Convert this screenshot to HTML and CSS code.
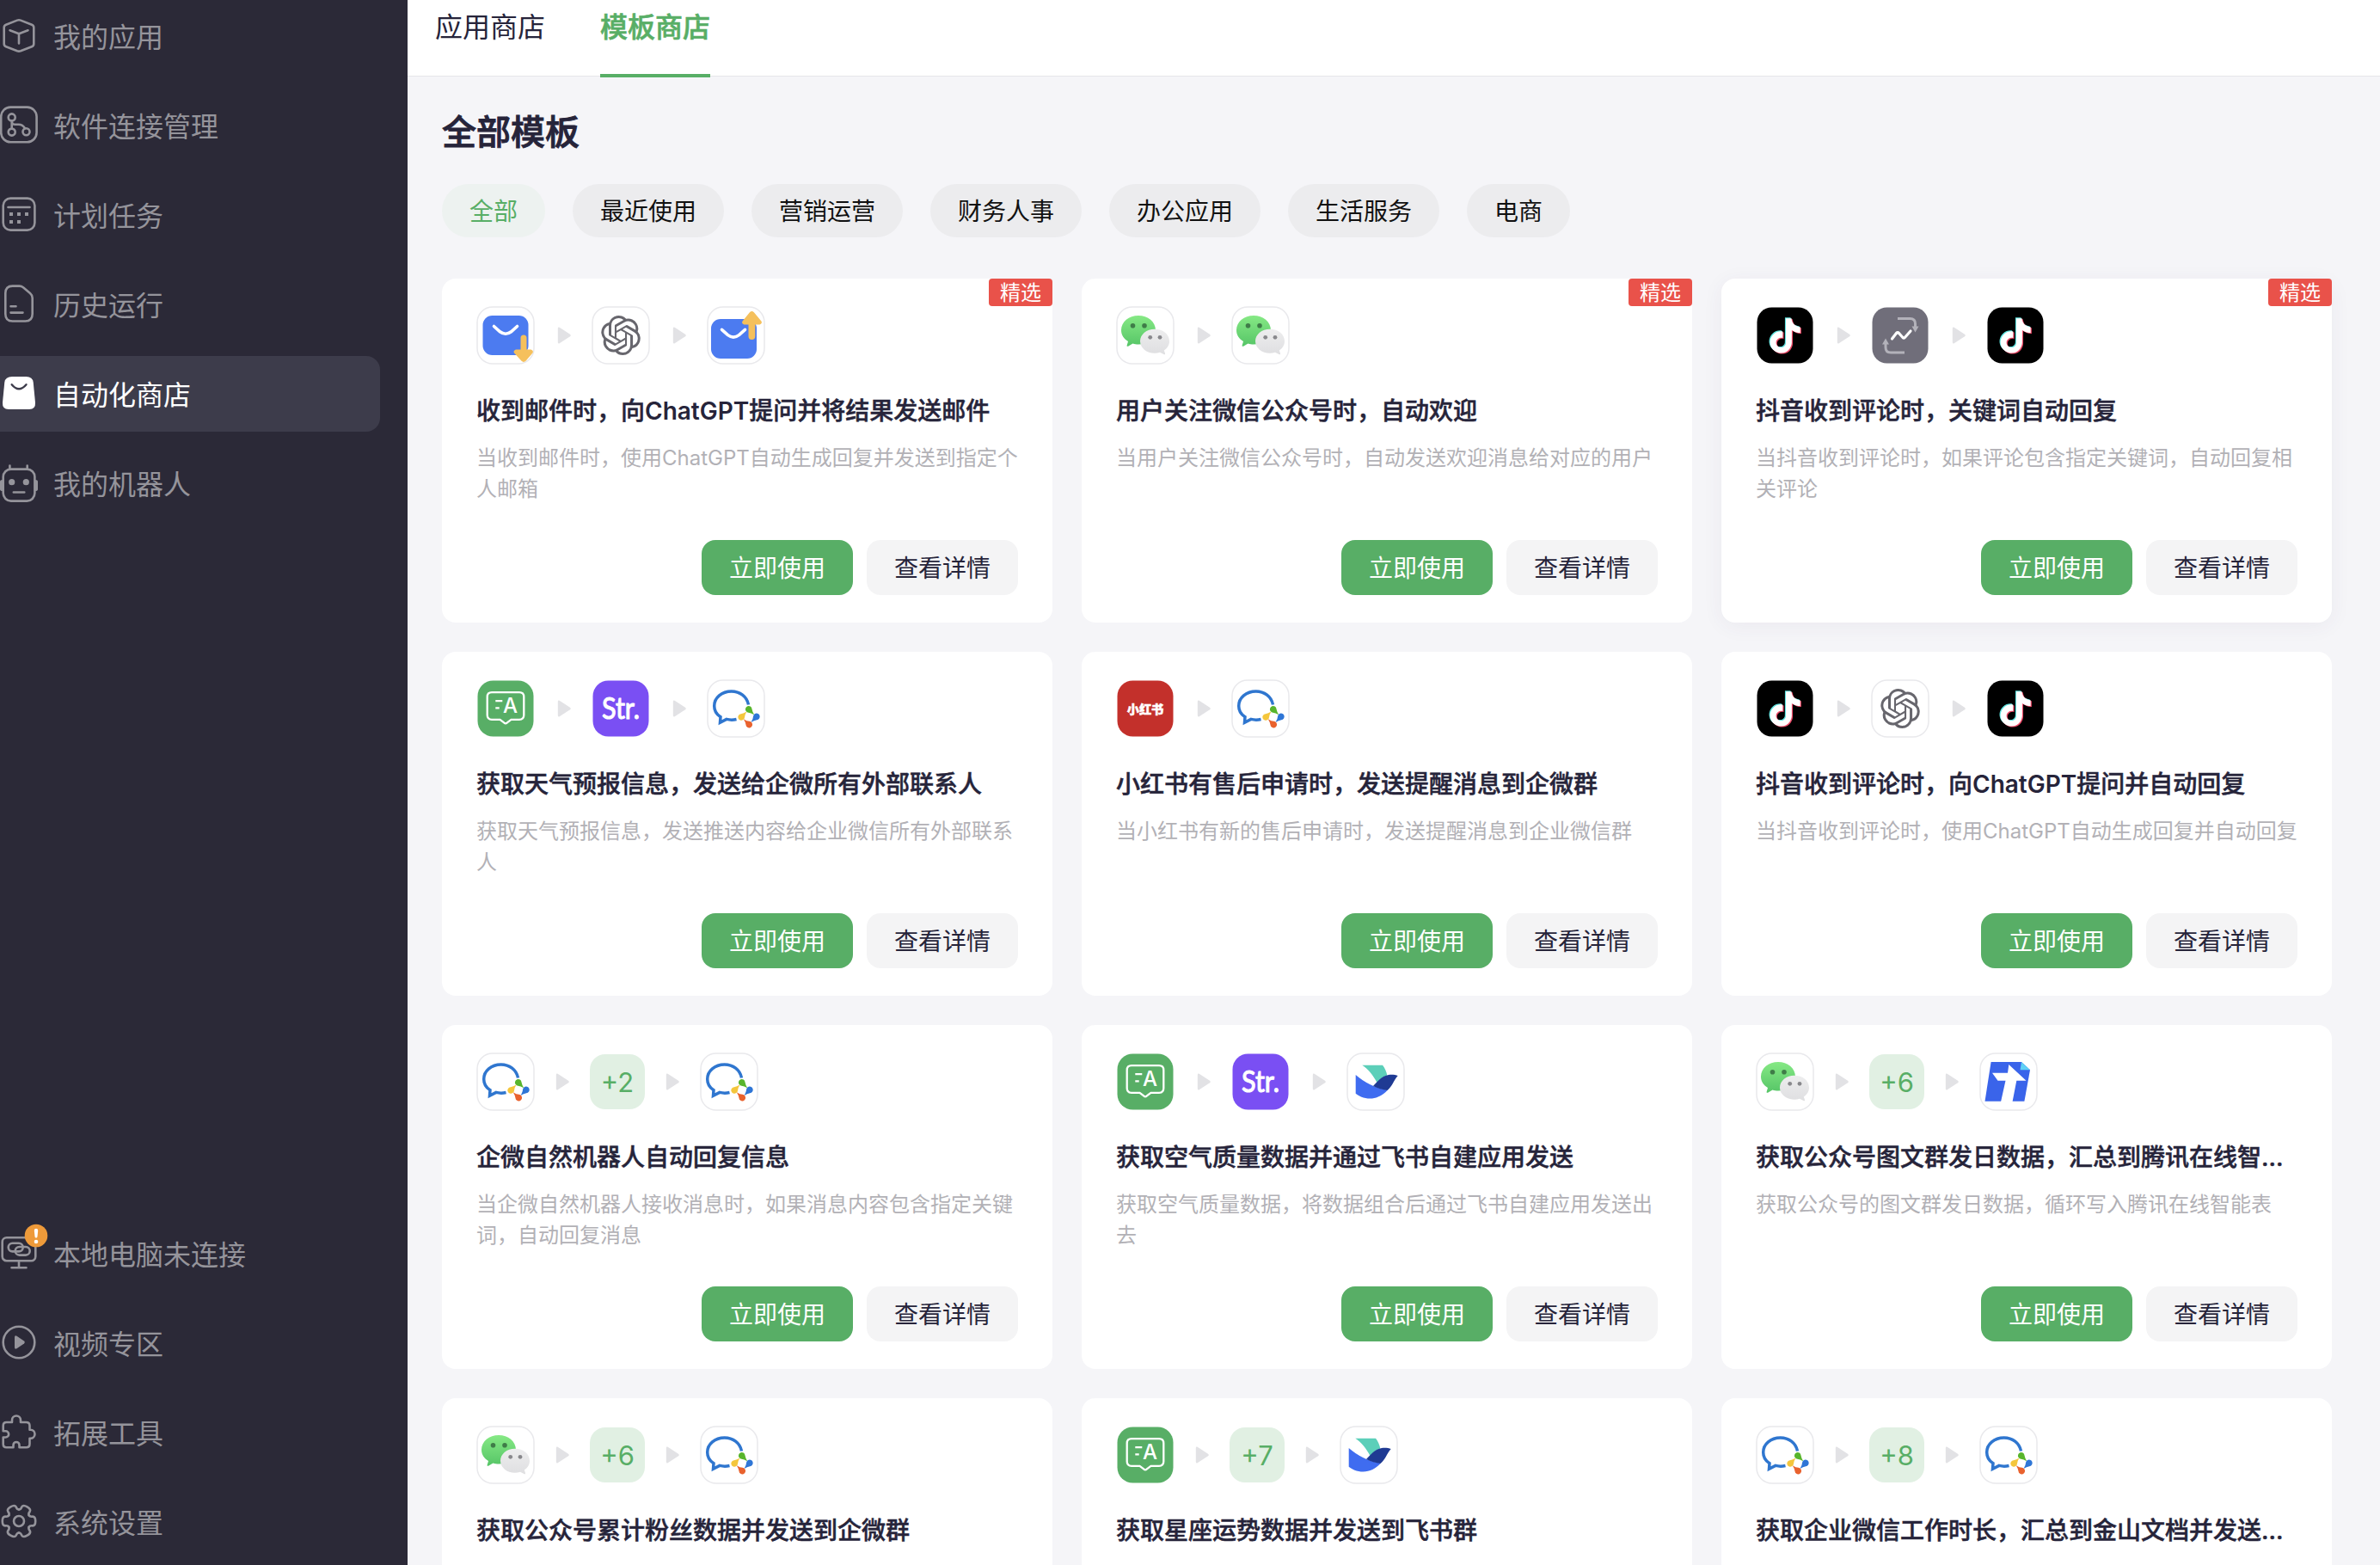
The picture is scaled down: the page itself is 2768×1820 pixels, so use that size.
FILE: index.html
```html
<!DOCTYPE html>
<html lang="zh-CN">
<head>
<meta charset="utf-8">
<title>模板商店</title>
<link rel="stylesheet" href="styles.css">
</head>
<body>
<svg class="defs" width="0" height="0" aria-hidden="true">
  <defs>
    <linearGradient id="wxGreen" x1="0" y1="0" x2="0" y2="1"><stop offset="0" stop-color="#86e985"/><stop offset="1" stop-color="#56c567"/></linearGradient>
    <linearGradient id="wxGrey" x1="0" y1="0" x2="0" y2="1"><stop offset="0" stop-color="#ededee"/><stop offset="1" stop-color="#dfdfe1"/></linearGradient>
    <path id="note" d="M12.525.02c1.31-.02 2.61-.01 3.91-.02.08 1.53.63 3.09 1.75 4.17 1.12 1.11 2.7 1.62 4.24 1.79v4.03c-1.44-.05-2.89-.35-4.2-.97-.57-.26-1.1-.59-1.62-.93-.01 2.92.01 5.84-.02 8.75-.08 1.4-.54 2.79-1.35 3.94-1.31 1.92-3.58 3.17-5.91 3.21-1.43.08-2.86-.31-4.08-1.03-2.02-1.19-3.44-3.37-3.65-5.71-.02-.5-.03-1-.01-1.49.18-1.9 1.12-3.72 2.58-4.96 1.66-1.44 3.98-2.13 6.15-1.72.02 1.48-.04 2.96-.04 4.44-.99-.32-2.15-.23-3.02.37-.63.41-1.11 1.04-1.36 1.75-.21.51-.15 1.07-.14 1.61.24 1.64 1.82 3.02 3.5 2.87 1.12-.01 2.19-.66 2.77-1.61.19-.33.4-.67.41-1.06.1-1.79.06-3.57.07-5.36.01-4.03-.01-8.05.02-12.07z"/>
    <path id="drop" d="M45.600 37A3.800 3.800 0 1 1 52.500 34.500Q53 37.700 55.200 41.200Q51.300 38.700 48.500 38.700Q46.600 38.500 45.600 37Z"/>
    <path id="tooth" d="M33.700 14.250C34.600 15.800 36.500 15.800 38 15.600C42.300 15.600 42.300 26.400 38 26.400C36.500 26.200 34.600 26.200 33.700 27.750"/>
  </defs>
  <symbol id="frame" viewBox="0 0 68 68"><rect x="1" y="1" width="66" height="66" rx="18" fill="#fff" stroke="#e9e9ec" stroke-width="1.500"/></symbol>
  <symbol id="mail-in" viewBox="0 0 68 68">
    <use href="#frame"/>
    <rect x="7.500" y="11" width="53" height="46" rx="11" fill="#4c7bf0"/>
    <path d="M20.500 23.500L27.500 29.800Q34 34.700 40.500 29.800L47.500 23.500" fill="none" stroke="#fff" stroke-width="3.600" stroke-linecap="round"/>
    <path d="M51.500 37a3.500 3.500 0 0 1 7 0V50.500H62.500C65.500 50.500 67 53 65 55L57.500 63.800Q55 66 52.500 63.800L44.500 55C42.500 53 44 50.500 47 50.500H51.500Z" fill="#f5c05c"/>
  </symbol>
  <symbol id="mail-out" viewBox="0 0 68 68">
    <use href="#frame"/>
    <rect x="5" y="15" width="53" height="46" rx="11" fill="#4c7bf0"/>
    <path d="M17.500 27.300L24.500 33.600Q31 38.500 37.500 33.600L44.500 27.300" fill="none" stroke="#fff" stroke-width="3.600" stroke-linecap="round"/>
    <path d="M48.500 35a3.900 3.900 0 0 0 7.800 0V21.500H60.500C63.500 21.500 65 19 63 17L54.900 7.200Q52.400 5 49.900 7.200L42 17C40 19 41.500 21.500 44.500 21.500H48.500Z" fill="#f5c05c"/>
  </symbol>
  <symbol id="openai" viewBox="0 0 68 68">
    <use href="#frame"/>
    <path transform="translate(11 11) scale(1.917)" fill="#67666d" d="M22.2819 9.8211a5.9847 5.9847 0 0 0-.5157-4.9108 6.0462 6.0462 0 0 0-6.5098-2.9A6.0651 6.0651 0 0 0 4.9807 4.1818a5.9847 5.9847 0 0 0-3.9977 2.9 6.0462 6.0462 0 0 0 .7427 7.0966 5.98 5.98 0 0 0 .511 4.9107 6.051 6.051 0 0 0 6.5146 2.9001A5.9847 5.9847 0 0 0 13.2599 24a6.0557 6.0557 0 0 0 5.7718-4.2058 5.9894 5.9894 0 0 0 3.9977-2.9001 6.0557 6.0557 0 0 0-.7475-7.0729zm-9.022 12.6081a4.4755 4.4755 0 0 1-2.8764-1.0408l.1419-.0804 4.7783-2.7582a.7948.7948 0 0 0 .3927-.6813v-6.7369l2.02 1.1686a.071.071 0 0 1 .038.052v5.5826a4.504 4.504 0 0 1-4.4945 4.4944zm-9.6607-4.1254a4.4708 4.4708 0 0 1-.5346-3.0137l.142.0852 4.783 2.7582a.7712.7712 0 0 0 .7806 0l5.8428-3.3685v2.3324a.0804.0804 0 0 1-.0332.0615L9.74 19.9502a4.4992 4.4992 0 0 1-6.1408-1.6464zM2.3408 7.8956a4.485 4.485 0 0 1 2.3655-1.9728V11.6a.7664.7664 0 0 0 .3879.6765l5.8144 3.3543-2.0201 1.1685a.0757.0757 0 0 1-.071 0l-4.8303-2.7865A4.504 4.504 0 0 1 2.3408 7.872zm16.5963 3.8558L13.1038 8.364 15.1192 7.2a.0757.0757 0 0 1 .071 0l4.8303 2.7913a4.4944 4.4944 0 0 1-.6765 8.1042v-5.6772a.79.79 0 0 0-.407-.667zm2.0107-3.0231l-.142-.0852-4.7735-2.7818a.7759.7759 0 0 0-.7854 0L9.409 9.2297V6.8974a.0662.0662 0 0 1 .0284-.0615l4.8303-2.7866a4.4992 4.4992 0 0 1 6.6802 4.66zM8.3065 12.863l-2.02-1.1638a.0804.0804 0 0 1-.038-.0567V6.0742a4.4992 4.4992 0 0 1 7.3757-3.4537l-.142.0805L8.704 5.459a.7948.7948 0 0 0-.3927.6813zm1.0976-2.3654l2.602-1.4998 2.6069 1.4998v2.9994l-2.5974 1.4997-2.6067-1.4997Z"/>
  </symbol>
  <symbol id="wechat" viewBox="0 0 68 68">
    <use href="#frame"/>
    <path d="M26 11C37 11 46 18.300 46 28S37 44.500 26 44.500C23.500 44.500 21.500 44.200 19.500 43.500L14 46.700C12.800 47.200 12.400 46.500 12.700 45.500L14 41C9 38 6 33.500 6 28C6 18.300 15 11 26 11Z" fill="url(#wxGreen)"/>
    <path d="M45 26.700C54.500 26.700 62 32.800 62 40.700C62 45.300 59.500 49 55.800 51.500L57 55C57.300 56.200 56.500 56.500 55.500 56L51 53.700C49 54.400 47 54.700 45 54.700C35.500 54.700 28 48.500 28 40.700S35.500 26.700 45 26.700Z" fill="url(#wxGrey)"/>
    <g fill="#3f7c48"><circle cx="19.500" cy="22.700" r="2.800"/><circle cx="33" cy="22.700" r="2.800"/></g>
    <g fill="#88888c"><circle cx="39.700" cy="36.300" r="2.400"/><circle cx="51" cy="36.300" r="2.400"/></g>
  </symbol>
  <symbol id="douyin" viewBox="0 0 68 68">
    <rect x="1.500" y="1.500" width="65" height="65" rx="17" fill="#000"/>
    <use href="#note" transform="translate(12.900 13.300) scale(1.680)" fill="#5fe3e0"/>
    <use href="#note" transform="translate(15.200 15.300) scale(1.680)" fill="#ee4a68"/>
    <use href="#note" transform="translate(14 14.300) scale(1.680)" fill="#fff"/>
  </symbol>
  <symbol id="loop" viewBox="0 0 68 68">
    <rect x="1.500" y="1.500" width="65" height="65" rx="17" fill="#706e7a"/>
    <g fill="none" stroke="#b3b2ba" stroke-width="3"><path d="M31 14.500H45.500Q51.500 14.500 51.500 20.500V24"/><path d="M39 54H23Q17 54 17 48V44"/></g>
    <path d="M47.500 23.500H55.500L51.500 30.500ZM13 44.500H21L17 37.500Z" fill="#b3b2ba"/>
    <path d="M24.500 38L29.500 31.500Q31 30 32.500 31.500L37 36.500Q38.300 37.800 39.600 36.300L46 29" fill="none" stroke="#fff" stroke-width="3.200" stroke-linejoin="round" stroke-linecap="round"/>
  </symbol>
  <symbol id="board" viewBox="0 0 68 68">
    <rect x="1.500" y="1.500" width="65" height="65" rx="18" fill="#58ae66"/>
    <path d="M18 15.200H50Q55.300 15.200 55.300 20.500V41.500Q55.300 46.800 50 46.800H40.500L35.500 50.700Q34 51.800 32.500 50.700L27.500 46.800H18Q12.700 46.800 12.700 41.500V20.500Q12.700 15.200 18 15.200Z" fill="none" stroke="#fff" stroke-width="2.300"/>
    <path d="M22.300 25.200H30.300M22.300 33.400H26.700" stroke="#fff" stroke-width="2.300"/>
    <text x="39.500" y="38.800" font-family="Inter, sans-serif" font-size="24" font-weight="500" fill="#fff" text-anchor="middle">A</text>
  </symbol>
  <symbol id="str" viewBox="0 0 68 68">
    <rect x="1.500" y="1.500" width="65" height="65" rx="18" fill="#7a4ff3"/>
    <text x="12" y="45.500" font-family="Lato, sans-serif" font-size="34" font-weight="400" fill="#fff" stroke="#fff" stroke-width="1.100" textLength="44" lengthAdjust="spacingAndGlyphs">Str.</text>
  </symbol>
  <symbol id="wecom" viewBox="0 0 68 68">
    <use href="#frame"/>
    <path d="M48.500 29.500C46.500 20 38.500 14 28.700 14C17.500 14 8.700 21.500 8.700 31C8.700 36.500 11.500 41 16 43.700L15.500 50.200L23 46.400C27 47.400 31 47.300 34.500 46.500" fill="none" stroke="#2f76cf" stroke-width="3.500"/>
    <use href="#drop" fill="#58b52c"/>
    <use href="#drop" fill="#2f76d6" transform="rotate(90 49 43.700)"/>
    <use href="#drop" fill="#e9622e" transform="rotate(180 49 43.700)"/>
    <use href="#drop" fill="#f4c63c" transform="rotate(270 49 43.700)"/>
  </symbol>
  <symbol id="xhs" viewBox="0 0 68 68">
    <rect x="1.500" y="1.500" width="65" height="65" rx="18" fill="#c3302b"/>
    <text x="34" y="39.600" font-family="'Noto Sans CJK SC', sans-serif" font-size="14.200" font-weight="900" fill="#fff" stroke="#fff" stroke-width=".5" text-anchor="middle">小红书</text>
  </symbol>
  <symbol id="feishu" viewBox="0 0 68 68">
    <use href="#frame"/>
    <path d="M18.300 14.700H42C44.500 18 46.500 22 47.300 26.500C42 28 39 32 35.700 35.500C31 26 25 19 18.300 14.700Z" fill="#5ccfb9"/>
    <path d="M10.700 26C20 34 34 42 48 43.500C42 50 35 53.500 27.500 53.500C20 53.500 14 50.500 10.700 47.700Z" fill="#3f6cf0"/>
    <path d="M31 39C36 34 41 27 49 26C53 25.500 57 26 59.700 27C55 32 53 40 47.500 44C42 43.500 36 41.500 31 39Z" fill="#1f3a93"/>
  </symbol>
  <symbol id="tdocs" viewBox="0 0 68 68">
    <use href="#frame"/>
    <path d="M13.600 11H49L59 20.300L52.400 56.700H6.500Z" fill="#3a64ea"/>
    <path d="M49 11L59 20.300H47.500Z" fill="#5fd0f5"/>
    <path d="M34.300 14L54.500 32.700H43.300L38.500 57.500H25L30.500 32.700H21.500L15 23.700H33Z" fill="#fff"/>
  </symbol>
  <symbol id="next" viewBox="0 0 16 20"><path d="M.8 2Q.8 0 2.700 .8L15 8.700Q16.600 10 15 11.300L2.700 19.200Q.8 20 .8 18Z" fill="#e2e2e5"/></symbol>
</svg>

<div class="app">
  <aside class="sidebar">
    <nav class="menu">
      <a class="menu-item">
        <svg class="menu-icon" viewBox="0 0 44 44"><path d="M20 3.600Q22 2.800 24 3.600L37 8.700Q39.300 9.700 39.300 12V31Q39.300 33.300 37 34.200L24 39.300Q22 40 20 39.300L7 34.200Q4.700 33.300 4.700 31V12Q4.700 9.700 7 8.700ZM11.500 15.300L22 19.300L32.500 15.300M22 19.300V30.500"/></svg>
        <span>我的应用</span></a>
      <a class="menu-item">
        <svg class="menu-icon" viewBox="0 0 44 44"><rect x="1.200" y=".6" width="41.400" height="40.600" rx="11"/><circle cx="13.700" cy="12.400" r="4"/><circle cx="13.700" cy="29.600" r="4"/><circle cx="30.500" cy="29.200" r="4"/><path d="M13.700 16.500V25.500M14 18.500Q14.500 20.700 17.500 20.700H21.500Q26.500 20.700 29 25.200"/></svg>
        <span>软件连接管理</span></a>
      <a class="menu-item">
        <svg class="menu-icon" viewBox="0 0 44 44"><rect x="3.700" y="2.600" width="36.700" height="37" rx="8.500"/><path d="M9.500 13H34.500"/><path class="solid" d="M11 19h4v4h-4zM20 19h4v4h-4zM29 19h4v4h-4zM11 28h4v4h-4zM20 28h4v4h-4z"/></svg>
        <span>计划任务</span></a>
      <a class="menu-item">
        <svg class="menu-icon" viewBox="0 0 44 44"><path d="M14.500.6H22.500Q25 .6 27 2.200L35 9Q37.700 11.300 37.700 14.500V33Q37.700 41.500 29.500 41.500H14.500Q6.300 41.500 6.300 33V9Q6.300.6 14.500.6ZM12.500 24.300H18.500M12.500 31.600H26.500"/></svg>
        <span>历史运行</span></a>
      <a class="menu-item active">
        <svg class="menu-icon" viewBox="0 0 44 44"><path class="solid" d="M14 2H30.500Q37.800 2 38.700 8.500L41 32Q41.500 40 34 40H10Q2.500 40 3 32L5.300 8.500Q6.300 2 14 2Z"/><path class="smile" d="M13.700 11.200Q22 21.300 30.500 11.200"/></svg>
        <span>自动化商店</span></a>
      <a class="menu-item">
        <svg class="menu-icon" viewBox="0 0 44 44"><rect x="3.700" y="5.600" width="36.700" height="37" rx="9"/><path d="M11.400 1.500V5M31.700 1.500V5M15.800 32.500H28.300"/><path class="solid" d="M0 20Q0 18 3 18V31Q0 31 0 29ZM44 20Q44 18 41 18V31Q44 31 44 29Z"/><circle class="solid" cx="13.700" cy="20.700" r="3.600"/><circle class="solid" cx="30.300" cy="20.700" r="3.600"/></svg>
        <span>我的机器人</span></a>
    </nav>
    <nav class="menu">
      <a class="menu-item">
        <svg class="menu-icon" viewBox="0 0 44 44"><rect x="2.700" y="3.200" width="38.600" height="27" rx="5"/><path d="M22 31V38M13.500 38.200H30.500"/><rect x="9.700" y="9.800" width="17" height="9.600" rx="4.800"/><rect x="17.700" y="14" width="17" height="9.600" rx="4.800"/><circle class="alert" cx="42" cy="1" r="13.300"/><path class="alert-mark" d="M39.800-5Q39.800-7.200 42-7.200T44.200-5L43.500 2Q43.400 3.500 42 3.500T40.500 2Z"/><circle class="alert-mark" cx="42" cy="8" r="2.300"/></svg>
        <span>本地电脑未连接</span></a>
      <a class="menu-item">
        <svg class="menu-icon" viewBox="0 0 44 44"><circle cx="22" cy="21" r="18.300"/><path class="solid" d="M17 15Q17 12.600 19.500 13.700L28 19.500Q29.800 21 28 22.500L19.500 28.300Q17 29.400 17 27Z"/></svg>
        <span>视频专区</span></a>
      <a class="menu-item">
        <svg class="menu-icon" viewBox="0 0 44 44"><path d="M7.500 10H14V7.500A5 5 0 0 1 24 7.500V10H30.500Q34.500 10 34.500 14V18.700H35.500A5 5 0 0 1 35.500 28.700H34.500V35.300Q34.500 39.300 30.500 39.300H22.500V36.500A3.500 3.500 0 0 0 15.500 36.500V39.300H7.500Q3.700 39.300 3.700 35.300V27.500H6.500A3.600 3.600 0 0 0 6.500 20.300H3.700V14Q3.700 10 7.500 10Z"/></svg>
        <span>拓展工具</span></a>
      <a class="menu-item">
        <svg class="menu-icon" viewBox="0 0 44 44"><use href="#tooth"/><use href="#tooth" transform="rotate(60 22 21)"/><use href="#tooth" transform="rotate(120 22 21)"/><use href="#tooth" transform="rotate(180 22 21)"/><use href="#tooth" transform="rotate(240 22 21)"/><use href="#tooth" transform="rotate(300 22 21)"/><circle cx="22" cy="21" r="6"/></svg>
        <span>系统设置</span></a>
    </nav>
  </aside>

  <main class="main">
    <header class="tabs">
      <a class="tab">应用商店</a>
      <a class="tab current">模板商店</a>
    </header>
    <section class="content">
      <h1 class="heading">全部模板</h1>
      <div class="filters">
        <a class="chip on">全部</a><a class="chip">最近使用</a><a class="chip">营销运营</a><a class="chip">财务人事</a><a class="chip">办公应用</a><a class="chip">生活服务</a><a class="chip">电商</a>
      </div>
      <div class="grid">
        <article class="card">
          <span class="badge">精选</span>
          <div class="flow"><svg class="logo"><use href="#mail-in"/></svg><svg class="next"><use href="#next"/></svg><svg class="logo"><use href="#openai"/></svg><svg class="next"><use href="#next"/></svg><svg class="logo"><use href="#mail-out"/></svg></div>
          <h2 class="title">收到邮件时，向<b class="latin">ChatGPT</b>提问并将结果发送邮件</h2>
          <p class="desc">当收到邮件时，使用ChatGPT自动生成回复并发送到指定个人邮箱</p>
          <div class="actions"><button class="btn primary">立即使用</button><button class="btn">查看详情</button></div>
        </article>
        <article class="card">
          <span class="badge">精选</span>
          <div class="flow"><svg class="logo"><use href="#wechat"/></svg><svg class="next"><use href="#next"/></svg><svg class="logo"><use href="#wechat"/></svg></div>
          <h2 class="title">用户关注微信公众号时，自动欢迎</h2>
          <p class="desc">当用户关注微信公众号时，自动发送欢迎消息给对应的用户</p>
          <div class="actions"><button class="btn primary">立即使用</button><button class="btn">查看详情</button></div>
        </article>
        <article class="card raised">
          <span class="badge">精选</span>
          <div class="flow"><svg class="logo"><use href="#douyin"/></svg><svg class="next"><use href="#next"/></svg><svg class="logo"><use href="#loop"/></svg><svg class="next"><use href="#next"/></svg><svg class="logo"><use href="#douyin"/></svg></div>
          <h2 class="title">抖音收到评论时，关键词自动回复</h2>
          <p class="desc">当抖音收到评论时，如果评论包含指定关键词，自动回复相关评论</p>
          <div class="actions"><button class="btn primary">立即使用</button><button class="btn">查看详情</button></div>
        </article>

        <article class="card">
          <div class="flow"><svg class="logo"><use href="#board"/></svg><svg class="next"><use href="#next"/></svg><svg class="logo"><use href="#str"/></svg><svg class="next"><use href="#next"/></svg><svg class="logo"><use href="#wecom"/></svg></div>
          <h2 class="title">获取天气预报信息，发送给企微所有外部联系人</h2>
          <p class="desc">获取天气预报信息，发送推送内容给企业微信所有外部联系人</p>
          <div class="actions"><button class="btn primary">立即使用</button><button class="btn">查看详情</button></div>
        </article>
        <article class="card">
          <div class="flow"><svg class="logo"><use href="#xhs"/></svg><svg class="next"><use href="#next"/></svg><svg class="logo"><use href="#wecom"/></svg></div>
          <h2 class="title">小红书有售后申请时，发送提醒消息到企微群</h2>
          <p class="desc">当小红书有新的售后申请时，发送提醒消息到企业微信群</p>
          <div class="actions"><button class="btn primary">立即使用</button><button class="btn">查看详情</button></div>
        </article>
        <article class="card">
          <div class="flow"><svg class="logo"><use href="#douyin"/></svg><svg class="next"><use href="#next"/></svg><svg class="logo"><use href="#openai"/></svg><svg class="next"><use href="#next"/></svg><svg class="logo"><use href="#douyin"/></svg></div>
          <h2 class="title">抖音收到评论时，向<b class="latin">ChatGPT</b>提问并自动回复</h2>
          <p class="desc">当抖音收到评论时，使用ChatGPT自动生成回复并自动回复</p>
          <div class="actions"><button class="btn primary">立即使用</button><button class="btn">查看详情</button></div>
        </article>

        <article class="card">
          <div class="flow folded"><svg class="logo"><use href="#wecom"/></svg><svg class="next"><use href="#next"/></svg><span class="more">+2</span><svg class="next"><use href="#next"/></svg><svg class="logo"><use href="#wecom"/></svg></div>
          <h2 class="title">企微自然机器人自动回复信息</h2>
          <p class="desc">当企微自然机器人接收消息时，如果消息内容包含指定关键词，自动回复消息</p>
          <div class="actions"><button class="btn primary">立即使用</button><button class="btn">查看详情</button></div>
        </article>
        <article class="card">
          <div class="flow"><svg class="logo"><use href="#board"/></svg><svg class="next"><use href="#next"/></svg><svg class="logo"><use href="#str"/></svg><svg class="next"><use href="#next"/></svg><svg class="logo"><use href="#feishu"/></svg></div>
          <h2 class="title">获取空气质量数据并通过飞书自建应用发送</h2>
          <p class="desc">获取空气质量数据，将数据组合后通过飞书自建应用发送出去</p>
          <div class="actions"><button class="btn primary">立即使用</button><button class="btn">查看详情</button></div>
        </article>
        <article class="card">
          <div class="flow folded"><svg class="logo"><use href="#wechat"/></svg><svg class="next"><use href="#next"/></svg><span class="more">+6</span><svg class="next"><use href="#next"/></svg><svg class="logo"><use href="#tdocs"/></svg></div>
          <h2 class="title">获取公众号图文群发日数据，汇总到腾讯在线智...</h2>
          <p class="desc">获取公众号的图文群发日数据，循环写入腾讯在线智能表</p>
          <div class="actions"><button class="btn primary">立即使用</button><button class="btn">查看详情</button></div>
        </article>

        <article class="card">
          <div class="flow folded"><svg class="logo"><use href="#wechat"/></svg><svg class="next"><use href="#next"/></svg><span class="more">+6</span><svg class="next"><use href="#next"/></svg><svg class="logo"><use href="#wecom"/></svg></div>
          <h2 class="title">获取公众号累计粉丝数据并发送到企微群</h2>
        </article>
        <article class="card">
          <div class="flow folded"><svg class="logo"><use href="#board"/></svg><svg class="next"><use href="#next"/></svg><span class="more">+7</span><svg class="next"><use href="#next"/></svg><svg class="logo"><use href="#feishu"/></svg></div>
          <h2 class="title">获取星座运势数据并发送到飞书群</h2>
        </article>
        <article class="card">
          <div class="flow folded"><svg class="logo"><use href="#wecom"/></svg><svg class="next"><use href="#next"/></svg><span class="more">+8</span><svg class="next"><use href="#next"/></svg><svg class="logo"><use href="#wecom"/></svg></div>
          <h2 class="title">获取企业微信工作时长，汇总到金山文档并发送...</h2>
        </article>
      </div>
    </section>
  </main>
</div>
</body>
</html>
```

FILE: styles.css
```css
* { box-sizing: border-box; }

body {
  margin: 0;
  font-family: Inter, "Noto Sans CJK SC", sans-serif;
  color: #26243a;
}

.defs { position: absolute; }

.app {
  display: flex;
  width: 2768px;
  height: 1820px;
  overflow: hidden;
  background: #f5f5f8;
}

/* Sidebar */
.sidebar {
  flex: none;
  width: 474px;
  height: 1820px;
  padding-bottom: 6px;
  display: flex;
  flex-direction: column;
  justify-content: space-between;
  background: #2b2937;
}

.menu {
  display: flex;
  flex-direction: column;
  gap: 16px;
}

.menu:first-child { margin-top: -2px; }

.menu-item {
  display: flex;
  align-items: center;
  gap: 18px;
  width: 442px;
  height: 88px;
  border-radius: 0 16px 16px 0;
  font-size: 32px;
  line-height: 44px;
  color: #95949b;
}

.menu-item span { padding-top: 3px; }

.menu-item.active {
  background: #3d3c4b;
  color: #fff;
}

.menu-icon {
  flex: none;
  width: 44px;
  height: 44px;
  overflow: visible;
  fill: none;
  stroke: currentColor;
  stroke-width: 2.6;
  stroke-linejoin: round;
  stroke-linecap: round;
}

.menu-icon .solid { fill: currentColor; stroke: none; }
.menu-icon .smile { stroke: #3d3c4b; stroke-width: 2.4; }
.menu-icon .alert { fill: #ee9a3a; stroke: none; }
.menu-icon .alert-mark { fill: #fff; stroke: none; }

/* Main column */
.main { flex: 1; }

.tabs {
  display: flex;
  gap: 64px;
  height: 89px;
  padding-left: 32px;
  background: #fff;
  border-bottom: 1px solid #e6e6e9;
}

.tab {
  height: 90px;
  padding-top: 10px;
  font-size: 32px;
  line-height: 44px;
}

.tab.current {
  color: #58ae66;
  font-weight: 500;
  -webkit-text-stroke: .6px;
  border-bottom: 4px solid #58ae66;
}

.content { padding: 40px 56px 0 40px; }

.heading {
  margin: 0;
  font-size: 40px;
  line-height: 50px;
  font-weight: 500;
  -webkit-text-stroke: .9px;
}

.filters {
  display: flex;
  gap: 32px;
  margin-top: 35px;
}

.chip {
  height: 62px;
  padding: 0 32px;
  border-radius: 31px;
  background: #ececee;
  color: #111;
  font-size: 28px;
  line-height: 64px;
}

.chip.on { background: #edf2f0; color: #58ae66; }

.grid {
  display: grid;
  grid-template-columns: repeat(3, 710px);
  grid-auto-rows: 400px;
  gap: 34px;
  margin-top: 48px;
}

.card {
  position: relative;
  display: flex;
  flex-direction: column;
  padding: 32px 40px;
  border-radius: 16px;
  background: #fff;
}

.card.raised { box-shadow: 0 4px 24px rgba(60, 50, 110, .06); }

.badge {
  position: absolute;
  top: 0;
  right: 0;
  width: 74px;
  height: 32px;
  border-radius: 4px;
  background: #e9524a;
  color: #fff;
  font-size: 24px;
  line-height: 34px;
  text-align: center;
}

.flow {
  display: flex;
  align-items: center;
  height: 68px;
}

.logo { width: 68px; height: 68px; }
.next { width: 16px; height: 20px; margin: 0 24px 0 26px; }
.folded .next { margin: 0 24px; }

.more {
  width: 64px;
  height: 64px;
  border-radius: 18px;
  background: #e1f0e3;
  color: #58ae66;
  font-size: 31px;
  line-height: 65px;
  text-align: center;
}

.title {
  margin: 34px 0 0;
  font-size: 28px;
  line-height: 40px;
  font-weight: 500;
  -webkit-text-stroke: .5px;
  white-space: nowrap;
}

.latin {
  font-weight: 600;
  -webkit-text-stroke: 0;
}

.desc {
  margin: 17px 0 0;
  font-size: 24px;
  line-height: 36px;
  color: #b2b1b6;
}

.actions {
  display: flex;
  justify-content: flex-end;
  gap: 16px;
  margin-top: auto;
}

.btn {
  width: 176px;
  height: 64px;
  padding: 0 0 2px;
  border: 0;
  border-radius: 16px;
  background: #f4f4f5;
  color: #26243a;
  font: inherit;
  font-size: 28px;
}

.btn.primary { background: #58ae66; color: #fff; }
```
